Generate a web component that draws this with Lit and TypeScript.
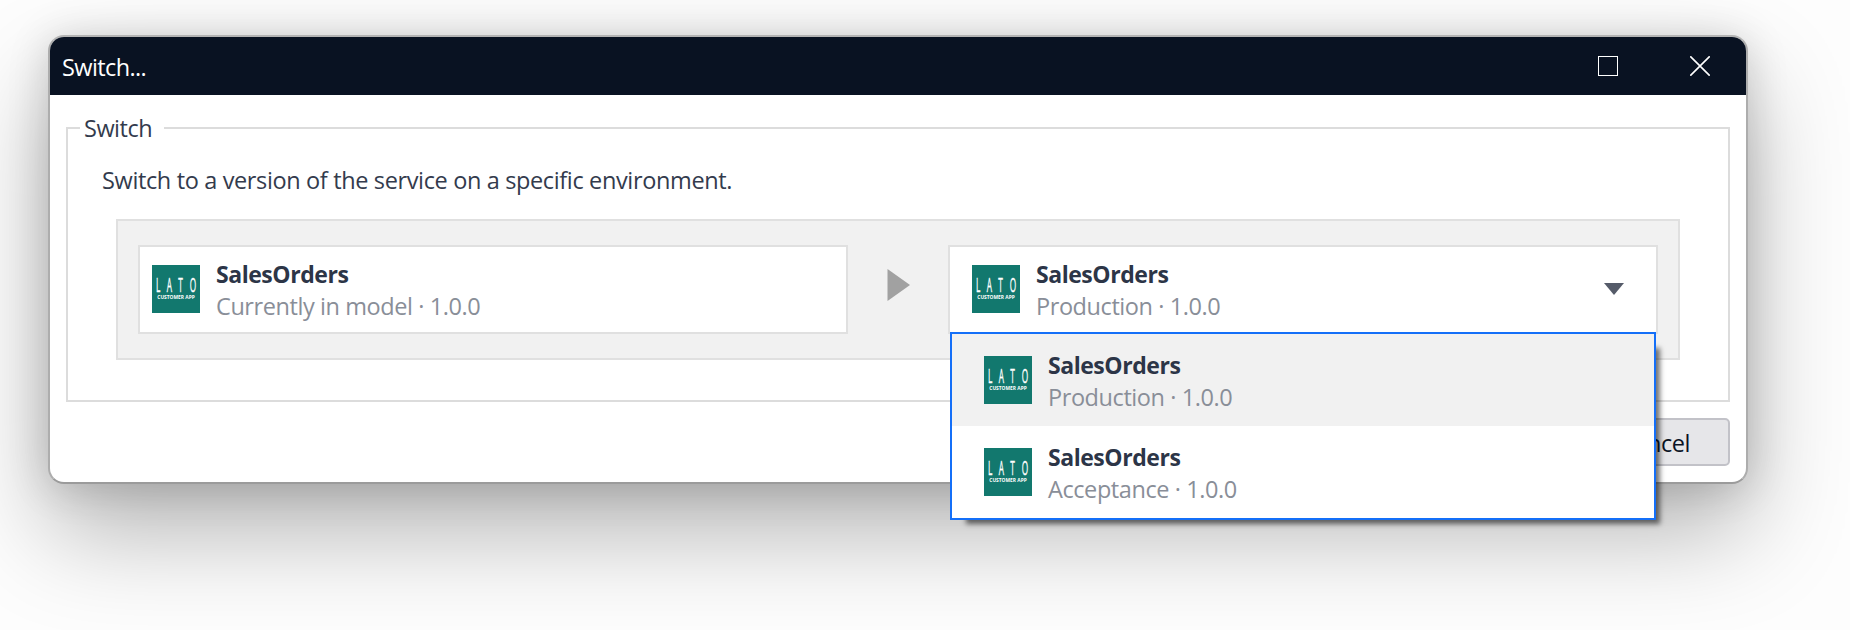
import { LitElement, html, css } from "lit";
import { customElement, property } from "lit/decorators.js";

@customElement("service-entry")
class ServiceEntry extends LitElement {
  @property() name = "";
  @property() detail = "";

  static styles = css`
    :host { display: flex; gap: 16px; align-items: flex-start; }
    .logo { display: block; width: 48px; height: 48px; flex: none; }
    .lines { display: flex; flex-direction: column; margin-top: -7px; white-space: nowrap; }
    .name { font-size: 23px; line-height: 32px; height: 32px; font-weight: 700; color: #2c3547; letter-spacing: -0.45px; }
    .detail { font-size: 23.5px; line-height: 33px; height: 33px; color: #898e98; letter-spacing: -0.42px; }
    .mark { font-family: "Open Sans", sans-serif; fill: #fff; }
    .big { font-size: 19.6px; stroke: #fff; stroke-width: .4px; }
    .small { font-size: 5.4px; font-weight: 700; }
  `;

  render() {
    return html`
      <svg class="logo" viewBox="0 0 48 48">
        <rect width="48" height="48" fill="#12786e"></rect>
        <text class="mark big" y="27" x="9.5 35 62.5 90" transform="scale(.42 1)">LATO</text>
        <text class="mark small" x="5.3" y="34" textLength="37.5" lengthAdjust="spacingAndGlyphs">CUSTOMER APP</text>
      </svg>
      <div class="lines">
        <span class="name">${this.name}</span>
        <span class="detail">${this.detail}</span>
      </div>
    `;
  }
}

@customElement("app-root")
class AppRoot extends LitElement {
  static styles = css`
    :host {
      display: block; box-sizing: border-box; height: 630px; padding: 35px 102px 0 48px;
      overflow: hidden; background: #fdfdfd;
      font-family: "Open Sans", "Noto Sans", sans-serif; font-size: 23.5px; color: #333b4d;
    }
    * { box-sizing: border-box; }
    .window {
      height: 449px; border: 2px solid #adadad; border-top-color: #b4b4b4; border-bottom-color: #9b9b9b;
      border-radius: 16px; background: #fff;
      box-shadow: 0 48px 100px rgba(0, 0, 0, .29), 0 3px 42px rgba(0, 0, 0, .16);
    }
    .titlebar {
      height: 58px; border-radius: 14px 14px 0 0; background: #091222; color: #fff;
      display: flex; align-items: center; padding: 0 36px 0 12px;
    }
    .title { flex: 1; line-height: 58px; padding-top: 1px; letter-spacing: -0.6px; }
    .win-icon { display: block; width: 20px; height: 20px; }
    .win-icon + .win-icon { margin-left: 72px; }
    .body { padding: 15px 16px 0; }
    fieldset {
      margin: 0; height: 292px; padding: 0 48px; border: 2px solid #dcdcdc; min-width: 0;
    }
    legend { height: 36px; width: 84px; margin-left: -36px; padding: 0 4px; line-height: 36px; letter-spacing: -0.5px; }
    .intro { margin: 12px 0 0 -14px; height: 61px; line-height: 44px; letter-spacing: -0.36px; white-space: nowrap; }
    .panel {
      height: 141px; border: 2px solid #e0e0e0; background: #f1f1f1; padding: 24px 20px;
      display: grid; grid-template-columns: 710px 1fr 710px;
    }
    .card { position: relative; height: 89px; border: 2px solid #e0e0e0; background: #fff; padding: 18px 12px; display: flex; }
    .card.select { padding: 18px 32px 0 22px; justify-content: space-between; }
    .arrow { align-self: center; margin: -9px 0 0 39px; display: block; }
    .chevron { margin-top: 18px; display: block; }
    .menu {
      position: absolute; left: 0; right: 0; top: 85px; height: 188px;
      border: 2px solid #146ff8; background: #fff;
      box-shadow: 10px 10px 5px -6px rgba(0, 0, 0, .55);
    }
    .option { height: 92px; padding: 22px 32px; }
    .option.active { background: #f1f1f1; }
    .actions { display: flex; justify-content: flex-end; margin-top: 16px; }
    .cancel {
      height: 48px; width: 150px; padding: 2px 0 0; border: 2px solid #c2c2c8; border-radius: 5px;
      background: #e6e6e9; color: #0a1325; font: inherit; letter-spacing: -0.4px; text-align: center;
    }
  `;

  render() {
    return html`
      <div class="window">
        <div class="titlebar">
          <span class="title">Switch...</span>
          <svg class="win-icon" viewBox="0 0 20 20"><rect x=".5" y=".5" width="19" height="19" fill="none" stroke="#fff"></rect></svg>
          <svg class="win-icon" viewBox="0 0 20 20"><path d="M.3.3 19.7 19.7M19.7.3.3 19.7" stroke="#fff" stroke-width="1.6"></path></svg>
        </div>
        <div class="body">
          <fieldset>
            <legend>Switch</legend>
            <p class="intro">Switch to a version of the service on a specific environment.</p>
            <div class="panel">
              <div class="card"><service-entry name="SalesOrders" detail="Currently in model · 1.0.0"></service-entry></div>
              <svg class="arrow" width="24" height="32" viewBox="0 0 24 32"><path d="M.5 0 23 16 .5 32Z" fill="#a1a1a1"></path></svg>
              <div class="card select">
                <service-entry name="SalesOrders" detail="Production · 1.0.0"></service-entry>
                <svg class="chevron" width="20" height="12" viewBox="0 0 20 12"><path d="M0 0H20L10 12Z" fill="#555b69"></path></svg>
                <div class="menu">
                  <div class="option active"><service-entry name="SalesOrders" detail="Production · 1.0.0"></service-entry></div>
                  <div class="option"><service-entry name="SalesOrders" detail="Acceptance · 1.0.0"></service-entry></div>
                </div>
              </div>
            </div>
          </fieldset>
          <div class="actions"><button class="cancel">Cancel</button></div>
        </div>
      </div>
    `;
  }
}
